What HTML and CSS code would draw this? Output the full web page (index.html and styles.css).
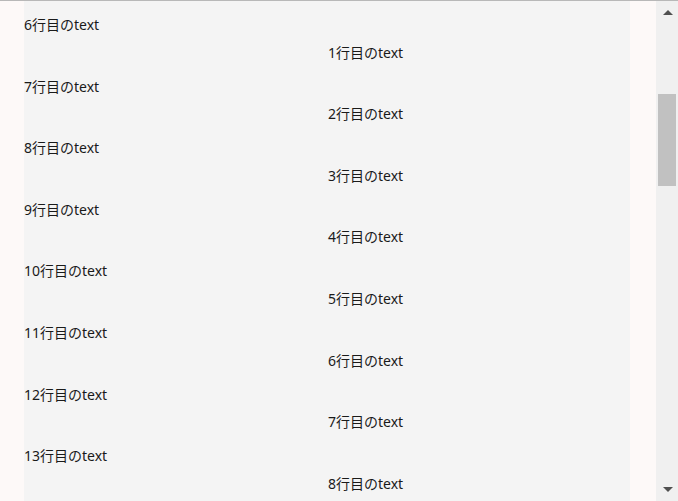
FILE: index.html
```html
<!DOCTYPE html>
<html lang="ja">
<head>
<meta charset="utf-8">
<title>list</title>
<link rel="stylesheet" href="styles.css">
</head>
<body>
<div class="frame">
  <div class="viewport">
    <div class="column">
      <div class="item left">6行目のtext</div>
      <div class="item right">1行目のtext</div>
      <div class="item left">7行目のtext</div>
      <div class="item right">2行目のtext</div>
      <div class="item left">8行目のtext</div>
      <div class="item right">3行目のtext</div>
      <div class="item left">9行目のtext</div>
      <div class="item right">4行目のtext</div>
      <div class="item left">10行目のtext</div>
      <div class="item right">5行目のtext</div>
      <div class="item left">11行目のtext</div>
      <div class="item right">6行目のtext</div>
      <div class="item left">12行目のtext</div>
      <div class="item right">7行目のtext</div>
      <div class="item left">13行目のtext</div>
      <div class="item right">8行目のtext</div>
    </div>
  </div>
  <div class="scrollbar">
    <div class="arrow up"></div>
    <div class="track">
      <div class="thumb"></div>
    </div>
    <div class="arrow down"></div>
  </div>
</div>
</body>
</html>
```
FILE: styles.css
```css
html, body {
  margin: 0;
  padding: 0;
  height: 100%;
  overflow: hidden;
  background: #fdf9f8;
}

.frame {
  display: flex;
  height: 501px;
  box-sizing: border-box;
  border-top: 1px solid #b8b8b8;
  width: 678px;
}

.viewport {
  flex: 1;
  display: flex;
  padding: 0 26px 0 24px;
  background: #fdf9f8;
  overflow: hidden;
}

.column {
  flex: 1;
  background: #f4f4f4;
  padding-top: 15px;
  font-family: "Noto Sans", "Noto Sans CJK JP", sans-serif;
  font-size: 14px;
  color: #1a1a1a;
}

.item {
  line-height: 18px;
  height: 18px;
  white-space: nowrap;
}

.left {
  margin-bottom: 9.6px;
}

.right {
  padding-left: 304px;
  margin-bottom: 16px;
}

.scrollbar {
  width: 22px;
  background: #f0f0f0;
  display: flex;
  flex-direction: column;
  align-items: center;
}

.arrow {
  width: 0;
  height: 0;
  border-left: 5px solid transparent;
  border-right: 5px solid transparent;
  margin-left: 1px;
}

.arrow.up {
  margin-top: 9px;
  border-bottom: 5px solid #505050;
}

.arrow.down {
  margin-bottom: 9px;
  border-top: 5px solid #505050;
}

.track {
  flex: 1;
  width: 100%;
  padding: 79px 2px 0 2px;
  box-sizing: border-box;
}

.thumb {
  height: 92px;
  background: #c1c1c1;
}
```
